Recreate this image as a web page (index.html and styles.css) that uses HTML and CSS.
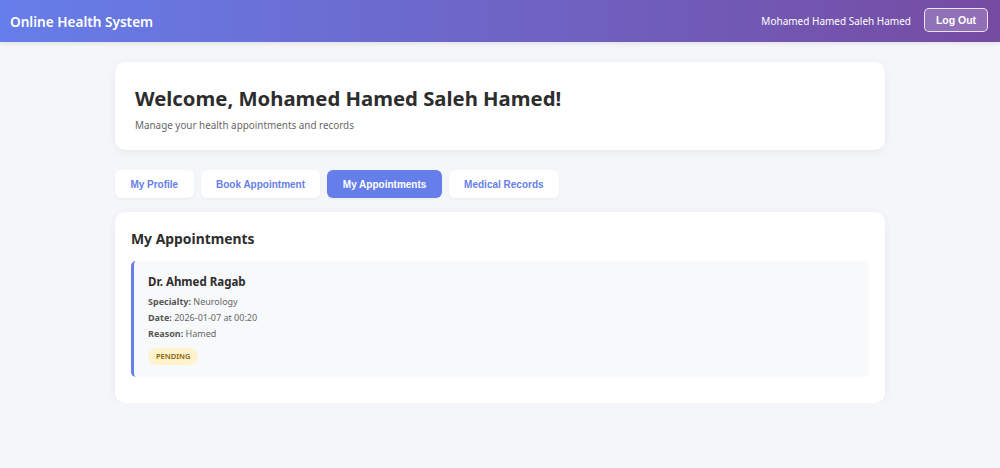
FILE: index.html
```html
<!DOCTYPE html>
<html>
<head>
<meta charset="utf-8">
<link rel="stylesheet" href="styles.css">
</head>
<body>
<header class="topbar">
  <div class="brand">Online Health System</div>
  <div class="user">
    <span class="user-name">Mohamed Hamed Saleh Hamed</span>
    <button class="logout">Log Out</button>
  </div>
</header>
<main class="container">
  <section class="card welcome">
    <h1>Welcome, Mohamed Hamed Saleh Hamed!</h1>
    <p>Manage your health appointments and records</p>
  </section>
  <nav class="tabs">
    <button class="tab">My Profile</button>
    <button class="tab">Book Appointment</button>
    <button class="tab active">My Appointments</button>
    <button class="tab">Medical Records</button>
  </nav>
  <section class="card content">
    <h2>My Appointments</h2>
    <div class="appt">
      <h3>Dr. Ahmed Ragab</h3>
      <p><strong>Specialty:</strong> Neurology</p>
      <p><strong>Date:</strong> 2026-01-07 at 00:20</p>
      <p><strong>Reason:</strong> Hamed</p>
      <span class="badge">PENDING</span>
    </div>
  </section>
</main>
</body>
</html>
```
FILE: styles.css
```css
* { box-sizing: border-box; }
body {
  margin: 0;
  background: #f4f6f9;
  font-family: "Noto Sans", "Open Sans", sans-serif;
  color: #333;
}
.topbar {
  height: 42px;
  background: linear-gradient(90deg, #667eea 0%, #764ba2 100%);
  display: flex;
  align-items: center;
  justify-content: space-between;
  padding: 0 12px 0 10px;
  color: #fff;
  box-shadow: 0 2px 4px rgba(0,0,0,0.08);
}
.brand { font-size: 13.6px; font-weight: 600; }
.user { display: flex; align-items: center; gap: 13px; }
.user-name { font-size: 10px; }
.logout {
  font-family: "Liberation Sans", Arial, sans-serif;
  font-weight: bold;
  font-size: 10.5px;
  color: #fff;
  background: rgba(255,255,255,0.2);
  border: 1px solid rgba(255,255,255,0.8);
  border-radius: 5px;
  width: 64px;
  height: 24px;
  padding: 0;
  margin-top: -2px;
}
.container {
  width: 770px;
  margin: 20px auto 0;
}
.card {
  background: #fff;
  border-radius: 10px;
  box-shadow: 0 2px 8px rgba(0,0,0,0.06);
}
.welcome { padding: 21px 20px 19px; height: 88px; }
.welcome h1 {
  margin: 0;
  font-size: 20.3px;
  font-weight: 700;
  color: #2d2d2d;
  line-height: 30px;
}
.welcome p {
  margin: 5px 0 0;
  font-size: 9.9px;
  color: #666;
}
.tabs {
  display: flex;
  gap: 7px;
  margin: 20px 0 14px;
}
.tab {
  font-family: "Liberation Sans", Arial, sans-serif;
  font-weight: bold;
  font-size: 10px;
  color: #667eea;
  background: #fff;
  border: none;
  border-radius: 6px;
  height: 28px;
  padding: 0 15.4px;
  box-shadow: 0 1px 3px rgba(0,0,0,0.05);
}
.tab.active { background: #667eea; color: #fff; }
.content { padding: 17px 16px 26px; }
.content h2 {
  margin: 0 0 12px;
  font-size: 13.9px;
  font-weight: 700;
  color: #2d2d2d;
  line-height: 20px;
}
.appt {
  background: #f8f9fb;
  border-left: 3px solid #667eea;
  border-radius: 5px;
  padding: 12px 14px 12px;
}
.appt h3 {
  margin: 0 0 3px;
  font-size: 11.5px;
  font-weight: 700;
  color: #2d2d2d;
  line-height: 18px;
}
.appt p {
  margin: 0;
  font-size: 9px;
  color: #666;
  line-height: 16px;
}
.appt p strong { color: #555; }
.badge {
  display: inline-block;
  margin-top: 6px;
  background: #fff3cd;
  color: #856404;
  font-size: 7.5px;
  font-weight: 600;
  line-height: 9px;
  padding: 4px 8px;
  border-radius: 10px;
}
```
